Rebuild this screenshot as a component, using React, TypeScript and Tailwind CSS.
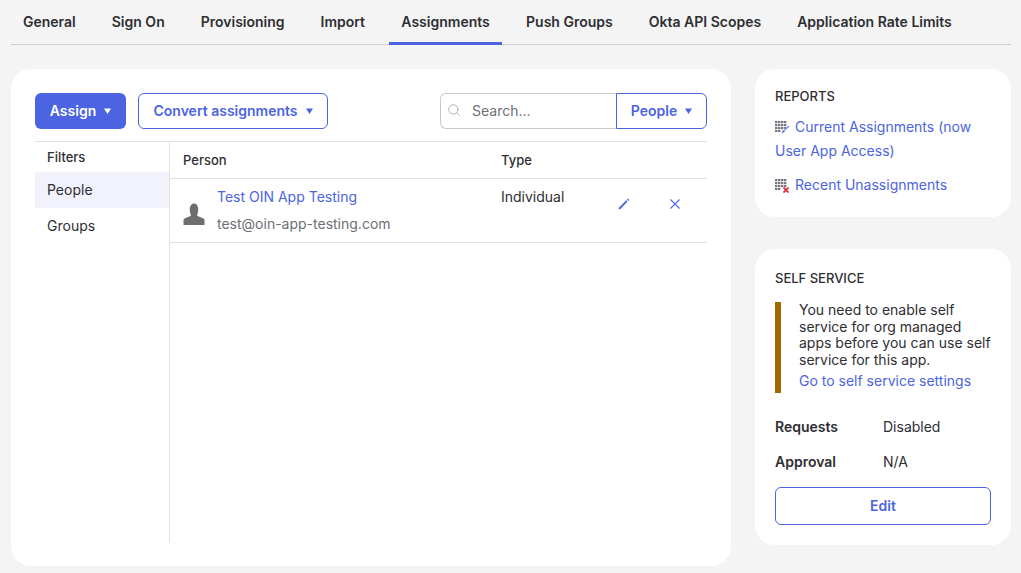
import { Search } from 'lucide-react';

const tabs = ['General', 'Sign On', 'Provisioning', 'Import', 'Assignments', 'Push Groups', 'Okta API Scopes', 'Application Rate Limits'];

const Caret = ({ className }: { className?: string }) => (
  <svg width="7" height="6" viewBox="0 0 7 6" className={className}>
    <path d="M0 0.5h7L3.5 6z" fill="currentColor" />
  </svg>
);

const GridIcon = ({ badge }: { badge: 'edit' | 'remove' }) => (
  <svg width="16" height="14" viewBox="0 0 16 14" className="mr-1 inline-block align-[-3px]">
    <g fill="#77777f">
      {[0, 3, 6].map((y) =>
        [0, 3, 6, 9].map((x) => <rect key={`${x}-${y}`} x={x} y={y} width="2.4" height="2.2" />)
      )}
      <rect x="0" y="9" width="2.4" height="2" />
      <rect x="3" y="9" width="2.4" height="2" />
    </g>
    {badge === 'edit' ? (
      <path d="M14.500 5.500l-1.500-.8-3.700 4.300-1.900.6-.9 2.700 2.700-.9.800-1.800z" fill="#4a65e4" stroke="#ffffff" strokeWidth="0.4" />
    ) : (
      <path d="M8.500 8.500l5 5M13.500 8.500l-5 5" stroke="#d5202b" strokeWidth="1.700" />
    )}
  </svg>
);

export default function App() {
  return (
    <div className="h-[573px] w-[1021px] overflow-hidden bg-[#f4f4f4] pl-[11px] pr-[10px] font-['Inter',sans-serif] text-sm text-[#2e2e33]">
      {/* Tabs */}
      <div className="flex h-[45px] gap-3 border-b border-[#cfcfcf]">
        {tabs.map((tab) => (
          <div
            key={tab}
            className={`flex h-[45px] items-center justify-center px-3 pb-[1px] font-semibold ${
              tab === 'Assignments' ? 'w-[113px] border-b-[3px] border-[#4c64e2] pt-[2px]' : ''
            }`}
          >
            {tab}
          </div>
        ))}
      </div>

      <div className="mt-6 flex items-start gap-6">
        {/* Main card */}
        <div className="h-[497px] w-[720px] rounded-[20px] bg-white px-6 pt-6">
          <div className="flex h-9 items-center">
            <button className="flex h-9 w-[91px] items-center justify-center gap-2 rounded-md bg-[#4c64e2] font-semibold text-white">
              Assign <Caret />
            </button>
            <button className="ml-3 flex h-9 w-[190px] items-center justify-center gap-2 rounded-md border border-[#4c64e2] font-semibold text-[#4c64e2]">
              Convert assignments <Caret />
            </button>
            <div className="ml-auto flex">
              <div className="flex h-9 w-[176px] items-center rounded-l-md border border-r-0 border-[#c9c9cc] pl-[6px]">
                <Search size={14} strokeWidth={1.500} className="mb-[3px] text-[#a6a6ad]" />
                <span className="ml-[11px] text-[#6e6e78]">Search...</span>
              </div>
              <button className="flex h-9 w-[91px] items-center justify-center gap-2 rounded-r-md border border-[#4c64e2] font-semibold text-[#4c64e2]">
                People <Caret />
              </button>
            </div>
          </div>

          {/* Filters and table */}
          <div className="mt-3 flex h-[402px] border-t border-[#e1e1e1]">
            <div className="w-[135px] shrink-0 border-r border-[#e1e1e1]">
              <div className="flex h-[30px] items-center px-3 text-[13px] font-medium">Filters</div>
              <div className="flex h-9 items-center bg-[#f1f2fc] px-3">People</div>
              <div className="flex h-9 items-center px-3">Groups</div>
            </div>
            <div className="flex-1">
              <div className="flex h-[37px] items-center border-b border-[#e1e1e1] text-[13px] font-medium">
                <div className="w-[331px] pl-[13px]">Person</div>
                <div>Type</div>
              </div>
              <div className="flex h-[64px] border-b border-[#e1e1e1]">
                <div className="flex w-[331px] pl-[13px]">
                  <svg width="22" height="22" viewBox="0 0 22 22" className="mt-[24px] shrink-0">
                    <path
                      d="M0.500 22v-4.600c0-1.200.8-1.900 2-2.400l5-2c.4-.5.4-1.300.2-1.900C6.900 9.900 6.800 8.500 6.800 6c0-3 1.600-5.500 4.200-5.500s4.200 2.500 4.200 5.500c0 2.500-.1 3.900-.9 5.100-.2.6-.2 1.400.2 1.900l5 2c1.200.5 2 1.200 2 2.400V22z"
                      fill="#6e6e6e"
                    />
                  </svg>
                  <div className="ml-[12px] pt-[8px]">
                    <div className="leading-5 text-[#4c64e2]">Test OIN App Testing</div>
                    <div className="mt-[7px] leading-5 text-[#6e6e78]">test@oin-app-testing.com</div>
                  </div>
                </div>
                <div className="w-[116px] pt-[8px] leading-5">Individual</div>
                <div className="flex items-start pt-[18px] text-[#4c64e2]">
                  <svg width="14" height="14" viewBox="0 0 14 14">
                    <path d="M1.500 12.500l.6-2 7.100-7.300 1.400 1.400-7.200 7.300z" fill="currentColor" />
                    <path d="M9.900 2.500l.9-.9 1.400 1.400-.9.900z" fill="currentColor" />
                  </svg>
                  <svg width="12" height="12" viewBox="0 0 12 12" className="ml-[38px] mt-[1px]">
                    <path d="M1.500 1.500l9 9M10.500 1.500l-9 9" stroke="currentColor" strokeWidth="1.100" />
                  </svg>
                </div>
              </div>
            </div>
          </div>
        </div>

        {/* Right column */}
        <div className="flex w-[256px] flex-col gap-8">
          <div className="h-[148px] rounded-[20px] bg-white px-5 pt-[18px]">
            <div className="text-[13px] font-medium leading-[18px]">REPORTS</div>
            <div className="mt-[10px] leading-6 text-[#4c64e2]">
              <GridIcon badge="edit" />
              Current Assignments (now User App Access)
            </div>
            <div className="mt-[10px] leading-6 text-[#4c64e2]">
              <GridIcon badge="remove" />
              Recent Unassignments
            </div>
          </div>

          <div className="h-[296px] rounded-[20px] bg-white px-5 pt-[20px]">
            <div className="text-[13px] font-medium leading-[18px]">SELF SERVICE</div>
            <div className="mt-[15px] flex h-[91px] border-l-[6px] border-[#a16a00] pl-[18px]">
              <div>
                <p className="leading-[16.670px]">
                  You need to enable self service for org managed apps before you can use self service for this app.
                </p>
                <div className="mt-[2px] leading-5 text-[#4c64e2]">Go to self service settings</div>
              </div>
            </div>
            <div className="mt-[24px] flex h-5 items-center">
              <div className="w-[108px] font-semibold">Requests</div>
              <div>Disabled</div>
            </div>
            <div className="mt-[15px] flex h-5 items-center">
              <div className="w-[108px] font-semibold">Approval</div>
              <div>N/A</div>
            </div>
            <button className="mt-[15px] h-[38px] w-full rounded-md border border-[#4c64e2] font-semibold text-[#4c64e2]">
              Edit
            </button>
          </div>
        </div>
      </div>
    </div>
  );
}
